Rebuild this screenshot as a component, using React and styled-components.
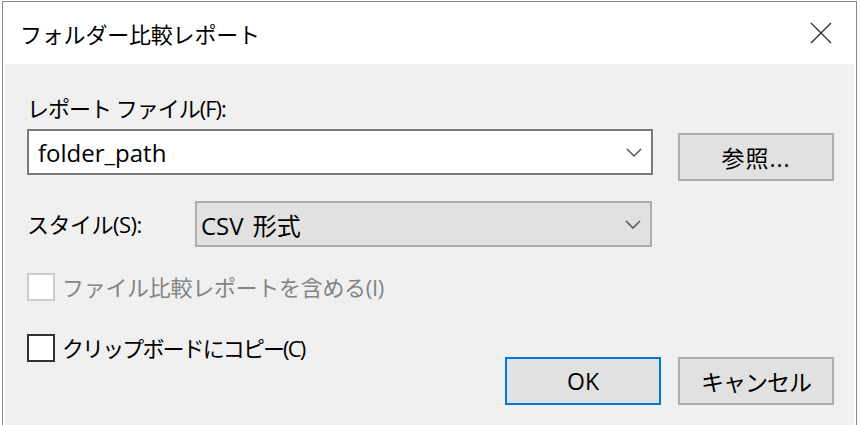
import React from "react";
import styled, { createGlobalStyle } from "styled-components";

const GlobalStyle = createGlobalStyle`
  html, body { margin: 0; padding: 0; background: #ffffff; }
  body {
    font-family: "Open Sans", "Noto Sans CJK JP", sans-serif;
    color: #000;
    overflow: hidden;
  }
  * { box-sizing: border-box; }
`;

const Window = styled.div`
  margin: 1px 3px 0 2px;
  height: 424px;
  border: 1px solid #8a8a8a;
  border-bottom: none;
  background: #ffffff;
  display: flex;
  flex-direction: column;
`;

const TitleBar = styled.div`
  height: 62px;
  flex: none;
  display: flex;
  align-items: center;
  justify-content: space-between;
  padding: 0 24px 0 17px;
`;

const Title = styled.div`
  font-family: "Noto Sans CJK JP", sans-serif;
  font-size: 22px;
  line-height: 30px;
  letter-spacing: -0.2px;
`;

const CloseIcon = styled.svg`
  width: 22px;
  height: 22px;
  display: block;
`;

const Body = styled.div`
  flex: 1;
  margin: 0 2px;
  background: #f0f0f0;
  padding: 29px 20px 0 22px;
  display: flex;
  flex-direction: column;
`;

const Label = styled.div`
  font-size: 22px;
  line-height: 30px;
  letter-spacing: ${(p) => p.$spacing || "0px"};
  white-space: nowrap;
`;

const PathRow = styled.div`
  margin-top: 6px;
  display: grid;
  grid-template-columns: 1fr 156px;
  column-gap: 25px;
  align-items: start;
`;

const ComboBox = styled.div`
  height: 46px;
  display: flex;
  align-items: center;
  justify-content: space-between;
  border: 2px solid ${(p) => (p.$editable ? "#7a7a7a" : "#adadad")};
  background: ${(p) => (p.$editable ? "#ffffff" : "#e1e1e1")};
  padding: 0 9px 0 ${(p) => (p.$editable ? "9px" : "4px")};
  font-size: 24px;
  word-spacing: ${(p) => (p.$editable ? "0px" : "3px")};
  white-space: nowrap;
`;

const Chevron = styled.svg`
  width: 16px;
  height: 9px;
  display: block;
  flex: none;
`;

const Button = styled.div`
  width: 156px;
  height: 48px;
  margin-top: ${(p) => p.$offset || "0px"};
  display: flex;
  align-items: center;
  justify-content: center;
  background: #e1e1e1;
  border: 2px solid ${(p) => (p.$default ? "#0078d7" : "#adadad")};
  font-size: ${(p) => p.$size || "22px"};
  letter-spacing: ${(p) => p.$spacing || "0px"};
  white-space: nowrap;
`;

const StyleRow = styled.div`
  margin-top: 20px;
  display: grid;
  grid-template-columns: 168px 457px;
  align-items: center;
`;

const CheckRow = styled.div`
  margin-top: ${(p) => p.$top || "0px"};
  display: flex;
  align-items: center;
  gap: 7px;
  color: ${(p) => (p.$disabled ? "#848484" : "#000")};
`;

const Box = styled.div`
  width: 28px;
  height: 28px;
  flex: none;
  background: #ffffff;
  border: 2px solid ${(p) => (p.$disabled ? "#cccccc" : "#333333")};
`;

const BottomRow = styled.div`
  margin-top: 31px;
  display: flex;
  justify-content: space-between;
  align-items: flex-start;
`;

const ButtonGroup = styled.div`
  display: flex;
  gap: 17px;
  margin-top: 24px;
`;

const DownArrow = () => (
  <Chevron viewBox="0 0 16 9">
    <polyline points="1,1 8,8 15,1" fill="none" stroke="#555" strokeWidth="1.5" />
  </Chevron>
);

export default function App() {
  return (
    <>
      <GlobalStyle />
      <Window>
        <TitleBar>
          <Title>フォルダー比較レポート</Title>
          <CloseIcon viewBox="0 0 22 22">
            <path d="M1 1 L21 21 M21 1 L1 21" stroke="#333" strokeWidth="1.4" fill="none" />
          </CloseIcon>
        </TitleBar>
        <Body>
          <Label $spacing="-1px">レポート ファイル(F):</Label>
          <PathRow>
            <ComboBox $editable>
              <span>folder_path</span>
              <DownArrow />
            </ComboBox>
            <Button $offset="4px" $size="23px" $spacing="1px">参照...</Button>
          </PathRow>
          <StyleRow>
            <Label $spacing="-0.5px">スタイル(S):</Label>
            <ComboBox>
              <span>CSV 形式</span>
              <DownArrow />
            </ComboBox>
          </StyleRow>
          <CheckRow $top="25px" $disabled>
            <Box $disabled />
            <Label $spacing="-0.3px">ファイル比較レポートを含める(I)</Label>
          </CheckRow>
          <BottomRow>
            <CheckRow>
              <Box />
              <Label $spacing="-1.9px">クリップボードにコピー(C)</Label>
            </CheckRow>
            <ButtonGroup>
              <Button $default $size="23px">OK</Button>
              <Button $size="23px" $spacing="-1px">キャンセル</Button>
            </ButtonGroup>
          </BottomRow>
        </Body>
      </Window>
    </>
  );
}
